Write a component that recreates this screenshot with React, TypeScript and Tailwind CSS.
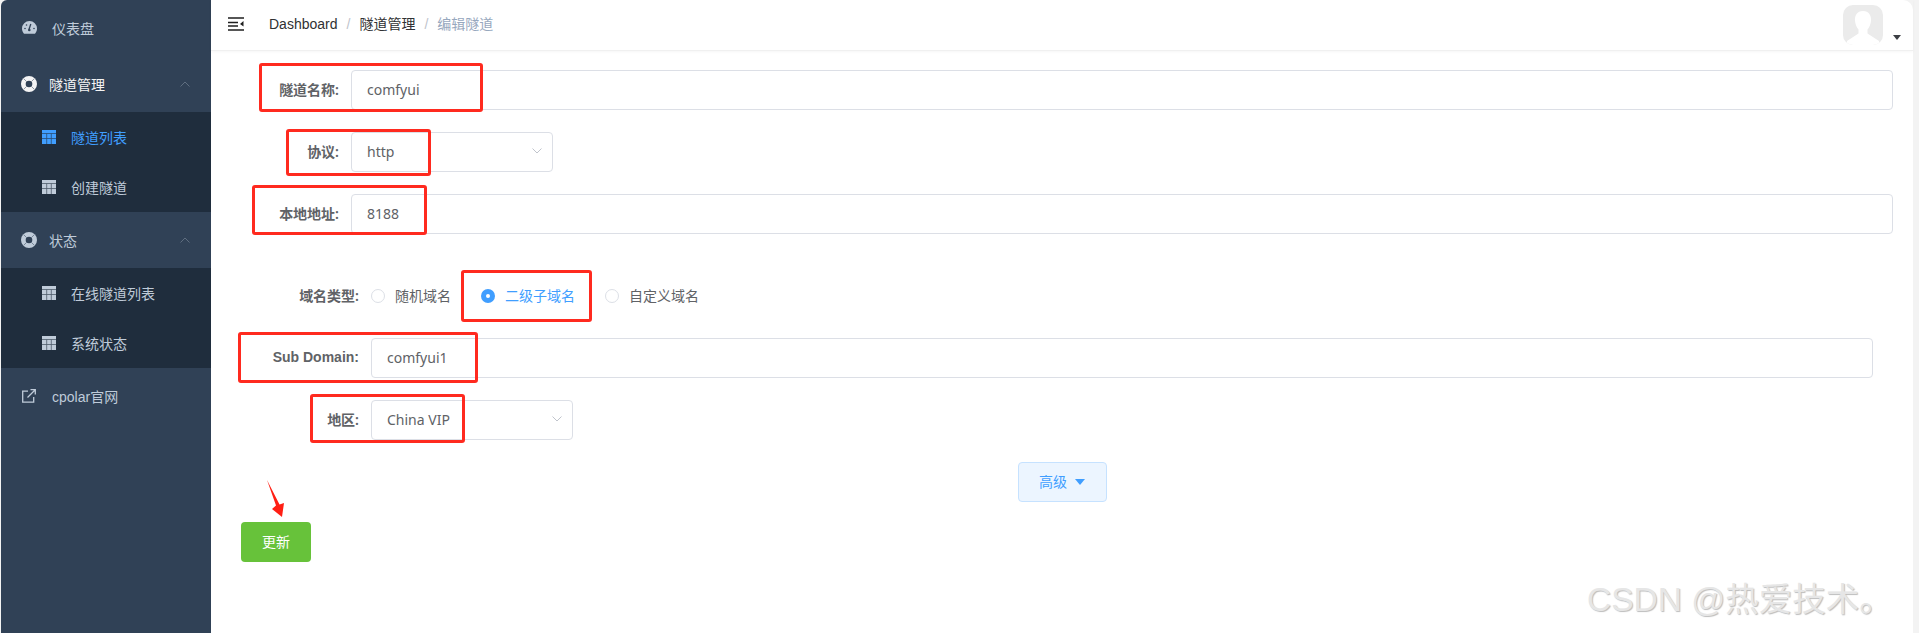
const MENU_TEXT = 'text-[14px] leading-none pt-[2px]'

function Gauge() {
  return (
    <svg width="15" height="13" viewBox="0 0 15 13" className="mb-[2px] text-[#bfcbd9]">
      <path
        fill="currentColor"
        d="M7.5 0A7.5 7.5 0 0 0 0 7.5c0 2 .7 3.8 2 5.2h11c1.300-1.400 2-3.200 2-5.200A7.500 7.500 0 0 0 7.500 0z"
      />
      <path d="M8.800 3 7 8.500" stroke="#304156" strokeWidth="1.300" />
      <circle cx="7.300" cy="9" r="1.300" fill="#304156" />
      <circle cx="3" cy="7.500" r=".8" fill="#304156" />
      <circle cx="12" cy="7.500" r=".8" fill="#304156" />
      <circle cx="4.500" cy="4" r=".8" fill="#304156" />
    </svg>
  )
}

function Lifebuoy({ color }: { color: string }) {
  return (
    <svg width="16" height="16" viewBox="0 0 16 16">
      <circle cx="8" cy="8" r="8" fill={color} />
      <circle cx="8" cy="8" r="3.300" fill="#304156" />
      <path d="M2.600 2.600 5.500 5.500M13.400 2.600 10.500 5.500M2.600 13.400 5.500 10.500M13.400 13.400 10.500 10.500" stroke="#304156" strokeWidth="1" opacity=".5" />
    </svg>
  )
}

function TableIcon({ color }: { color: string }) {
  return (
    <svg width="14" height="14" viewBox="0 0 14 14">
      <rect width="14" height="14" fill={color} />
      <path d="M0 3.500h14M0 8.500h14M4.700 3.500V14M9.300 3.500V14" stroke="#1f2d3d" strokeWidth=".8" opacity=".7" />
    </svg>
  )
}

function ExternalIcon() {
  return (
    <svg width="14" height="14" viewBox="0 0 14 14" fill="none" stroke="#bfcbd9" strokeWidth="1.300">
      <path d="M6 2.200H.7v11h11V8" />
      <path d="M5.500 8.500 13 1M8.500.7h4.800v4.800" />
    </svg>
  )
}

function Chevron({ up }: { up?: boolean }) {
  return (
    <svg width="10" height="6" viewBox="0 0 10 6" fill="none" stroke={up ? '#5f6e80' : '#c0c4cc'} strokeWidth="1">
      <path d={up ? 'M.5 5.500 5 1l4.500 4.500' : 'M.5.500 5 5 9.500.500'} />
    </svg>
  )
}

function TopItem({ icon, label, left, expanded, active, latin }: { icon: React.ReactNode; label: string; left: string; expanded?: boolean; active?: boolean; latin?: boolean }) {
  return (
    <div className="flex h-[56px] items-center pl-[20px] pr-[21px]">
      <span className="flex w-[16px] justify-center">{icon}</span>
      <span className={`${MENU_TEXT} ${left} ${active ? 'text-[#f4f4f5]' : 'text-[#bfcbd9]'} ${latin ? "font-['Liberation_Sans','Noto_Sans_CJK_SC',sans-serif]" : ''}`}>{label}</span>
      {expanded && (
        <span className="ml-auto">
          <Chevron up />
        </span>
      )}
    </div>
  )
}

function SubItem({ label, active }: { label: string; active?: boolean }) {
  return (
    <div className="flex h-[50px] items-center bg-[#1f2d3d] pl-[41px]">
      <span className="mb-[1px]">
        <TableIcon color={active ? '#409eff' : '#bfcbd9'} />
      </span>
      <span className={`${MENU_TEXT} ml-[15px] ${active ? 'text-[#409eff]' : 'text-[#bfcbd9]'}`}>{label}</span>
    </div>
  )
}

function Sidebar() {
  return (
    <aside className="h-full w-[210px] shrink-0 rounded-tl-[6px] bg-[#304156]">
      <TopItem icon={<Gauge />} label="仪表盘" left="ml-[15px]" />
      <TopItem icon={<Lifebuoy color="#f4f4f5" />} label="隧道管理" left="ml-[12px]" expanded active />
      <SubItem label="隧道列表" active />
      <SubItem label="创建隧道" />
      <TopItem icon={<Lifebuoy color="#bfcbd9" />} label="状态" left="ml-[12px]" expanded />
      <SubItem label="在线隧道列表" />
      <SubItem label="系统状态" />
      <TopItem icon={<ExternalIcon />} label="cpolar官网" left="ml-[15px]" latin />
    </aside>
  )
}

function Navbar() {
  return (
    <header className="flex h-[51px] items-center border-b border-[#f0f0f0] pl-[17px] pr-[12px] shadow-[0_1px_3px_rgba(0,0,0,0.04)]">
      <svg width="16" height="14" viewBox="0 0 16 14" className="mb-[2px]">
        <path d="M0 1h16M0 13h16M0 5.500h10M0 9h10" stroke="#1f1f1f" strokeWidth="1.600" />
        <path d="M15.500 4v5.500L12 7z" fill="#1f1f1f" />
      </svg>
      <nav className="mb-[2px] ml-[25px] flex items-center font-['Liberation_Sans','Noto_Sans_CJK_SC',sans-serif] text-[14px]">
        <span className="text-[#303133]">Dashboard</span>
        <span className="mx-[9px] text-[#c0c4cc]">/</span>
        <span className="text-[#303133]">隧道管理</span>
        <span className="mx-[9px] text-[#c0c4cc]">/</span>
        <span className="text-[#97a8be]">编辑隧道</span>
      </nav>
      <div className="ml-auto flex items-end">
        <div className="h-[40px] w-[40px] overflow-hidden rounded-[10px] bg-[#ebebeb]">
          <svg width="40" height="40" viewBox="0 0 40 40">
            <path d="M20 6c-6 0-8.500 4.500-8 10 .3 3.500 2 7 3.500 8.500v4L4 36v4h32v-4l-11.500-7.500v-4c1.500-1.500 3.200-5 3.500-8.500.5-5.500-2-10-8-10z" fill="#fff" />
          </svg>
        </div>
        <span className="mb-[5px] ml-[10px] h-0 w-0 border-x-[4px] border-t-[5px] border-x-transparent border-t-[#3c3f44]" />
      </div>
    </header>
  )
}

function FormRow({ label, children, className = '' }: { label: string; children: React.ReactNode; className?: string }) {
  return (
    <div className={`mb-[22px] flex items-center ${className}`}>
      <label className="w-[110px] shrink-0 pb-[2px] pr-[12px] text-right text-[14px] font-semibold text-[#606266]">{label}</label>
      {children}
    </div>
  )
}

function TextField({ value }: { value: string }) {
  return (
    <div className="flex h-[40px] flex-1 items-center rounded-[4px] border border-[#dcdfe6] px-[15px] pb-[2px] text-[14px] text-[#606266]">
      {value}
    </div>
  )
}

function SelectField({ value }: { value: string }) {
  return (
    <div className="flex h-[40px] w-[202px] items-center justify-between rounded-[4px] border border-[#dcdfe6] pb-[2px] pl-[15px] pr-[10px] text-[14px] text-[#606266]">
      {value}
      <Chevron />
    </div>
  )
}

function Radio({ label, checked }: { label: string; checked?: boolean }) {
  return (
    <div className="mr-[30px] flex items-center">
      {checked ? (
        <span className="flex h-[14px] w-[14px] items-center justify-center rounded-full bg-[#409eff]">
          <span className="h-[4px] w-[4px] rounded-full bg-white" />
        </span>
      ) : (
        <span className="h-[14px] w-[14px] rounded-full border border-[#dcdfe6]" />
      )}
      <span className={`ml-[10px] pb-[2px] text-[14px] ${checked ? 'text-[#409eff]' : 'text-[#606266]'}`}>{label}</span>
    </div>
  )
}

const MARKS = [
  'left-[259px] top-[63px] h-[49px] w-[224px]',
  'left-[286px] top-[129px] h-[47px] w-[145px]',
  'left-[252px] top-[185px] h-[50px] w-[175px]',
  'left-[461px] top-[270px] h-[52px] w-[131px]',
  'left-[238px] top-[332px] h-[51px] w-[240px]',
  'left-[310px] top-[394px] h-[49px] w-[155px]',
]

export default function App() {
  return (
    <div className="relative flex h-screen w-full overflow-hidden bg-[#f3f3f3] pl-px pr-[6px] font-['Noto_Sans','Noto_Sans_CJK_SC',sans-serif]">
      <Sidebar />
      <main className="h-full flex-1 rounded-tr-[10px] bg-white">
        <Navbar />
        <form className="pl-[30px] pr-[20px] pt-[19px]">
          <FormRow label="隧道名称:">
            <TextField value="comfyui" />
          </FormRow>
          <FormRow label="协议:">
            <SelectField value="http" />
          </FormRow>
          <FormRow label="本地地址:">
            <TextField value="8188" />
          </FormRow>
          <div className="pl-[20px] pr-[20px] pt-[20px]">
            <FormRow label="域名类型:">
              <div className="flex h-[40px] items-center">
                <Radio label="随机域名" />
                <Radio label="二级子域名" checked />
                <Radio label="自定义域名" />
              </div>
            </FormRow>
            <FormRow label="Sub Domain:" className="[&>label]:font-['Liberation_Sans',sans-serif] [&>label]:font-bold">
              <TextField value="comfyui1" />
            </FormRow>
            <FormRow label="地区:">
              <SelectField value="China VIP" />
            </FormRow>
          </div>
          <div className="flex justify-center pr-[10px]">
            <button type="button" className="flex h-[40px] w-[89px] items-center justify-center gap-[8px] rounded-[4px] border border-[#c6e2ff] bg-[#ecf5ff] pb-[1px] text-[14px] text-[#409eff]">
              高级
              <span className="mt-[1px] h-0 w-0 border-x-[5px] border-t-[6px] border-x-transparent border-t-[#409eff]" />
            </button>
          </div>
          <button type="button" className="mt-[20px] h-[40px] w-[70px] rounded-[4px] bg-[#67c23a] pb-[1px] text-[14px] text-white">
            更新
          </button>
        </form>
      </main>

      {/* red annotations drawn on top of the screenshot */}
      {MARKS.map((m) => (
        <div key={m} className={`absolute rounded-[3px] border-[3px] border-[#ff2a1f] ${m}`} />
      ))}
      <svg width="20" height="40" viewBox="0 0 20 40" className="absolute left-[266px] top-[479px]">
        <path d="M1 1 10 26.500 6 30 16 38 18 24 13.500 25.500z" fill="#ff1f14" />
      </svg>
      <div className="absolute left-[1587px] top-[574px] font-['Liberation_Sans','Noto_Sans_CJK_SC',sans-serif] text-[33.5px] leading-[52px] text-[#e6e6e6] [text-shadow:1px_1px_1px_#bdbdbd]">
        CSDN @热爱技术。
      </div>
    </div>
  )
}
